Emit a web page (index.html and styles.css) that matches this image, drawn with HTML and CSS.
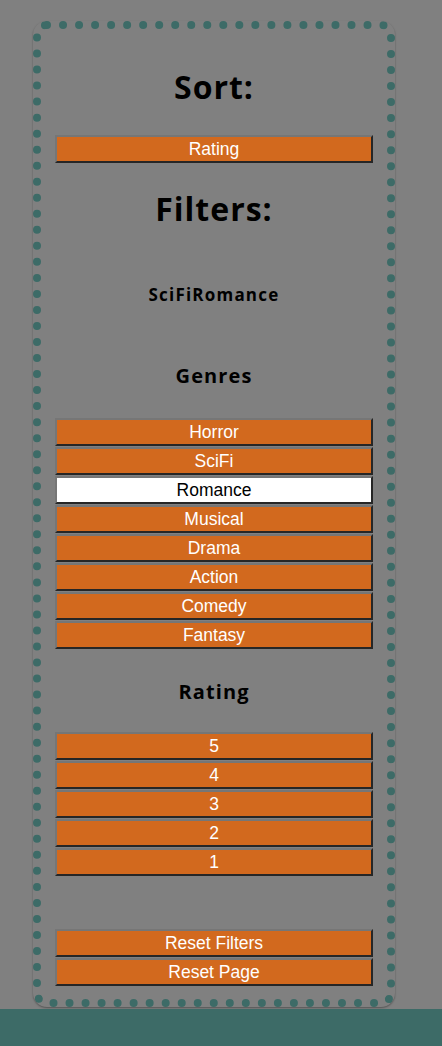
FILE: index.html
```html
<!DOCTYPE html>
<html>
<head>
<meta charset="utf-8">
<link rel="stylesheet" href="styles.css">
</head>
<body>
<div class="page">
  <aside class="panel">
    <h1 class="title title-sort">Sort:</h1>
    <button class="btn">Rating</button>
    <h1 class="title title-filters">Filters:</h1>
    <h4 class="active">SciFiRomance</h4>
    <h3 class="sub sub-genres">Genres</h3>
    <div class="list">
      <button class="btn">Horror</button>
      <button class="btn">SciFi</button>
      <button class="btn selected">Romance</button>
      <button class="btn">Musical</button>
      <button class="btn">Drama</button>
      <button class="btn">Action</button>
      <button class="btn">Comedy</button>
      <button class="btn">Fantasy</button>
    </div>
    <h3 class="sub sub-rating">Rating</h3>
    <div class="list">
      <button class="btn">5</button>
      <button class="btn">4</button>
      <button class="btn">3</button>
      <button class="btn">2</button>
      <button class="btn">1</button>
    </div>
    <div class="list resets">
      <button class="btn">Reset Filters</button>
      <button class="btn">Reset Page</button>
    </div>
  </aside>
</div>
<footer class="footer"></footer>
</body>
</html>
```
FILE: styles.css
```css
html, body {
  margin: 0;
  padding: 0;
  background: #808080;
}
body {
  min-height: 1046px;
  display: flex;
  flex-direction: column;
}
.page {
  padding: 21px 0 0 33px;
}
.panel {
  box-sizing: border-box;
  width: 362px;
  border: 8px dotted #3d6b67;
  border-radius: 14px;
  box-shadow: 0 1px 2px rgba(0, 0, 0, 0.35);
  padding: 0 14px 13px;
  display: flex;
  flex-direction: column;
  align-items: stretch;
  font-family: "Open Sans", "Liberation Sans", sans-serif;
  color: #000;
}
.title {
  margin: 0;
  font-size: 32px;
  font-weight: 700;
  line-height: 40px;
  text-align: center;
  letter-spacing: 1px;
}
.title-sort { margin-top: 38px; margin-bottom: 28px; }
.title-filters { margin-top: 26px; }
.active {
  margin: 56px 0 0;
  font-size: 17px;
  line-height: 20px;
  font-weight: 700;
  text-align: center;
  letter-spacing: 1.2px;
}
.sub {
  margin: 0;
  font-size: 20px;
  line-height: 24px;
  font-weight: 700;
  text-align: center;
  letter-spacing: 1.1px;
}
.sub-genres { margin-top: 59px; margin-bottom: 30px; }
.sub-rating { margin-top: 31px; margin-bottom: 28px; }
.list {
  display: flex;
  flex-direction: column;
  gap: 1px;
}
.resets { margin-top: 53px; }
.btn {
  box-sizing: border-box;
  height: 28px;
  width: 100%;
  margin: 0;
  padding: 0;
  background: #d2691e;
  color: #fff;
  font-family: "Liberation Sans", Arial, sans-serif;
  font-size: 17.5px;
  line-height: 24px;
  border: 2px solid;
  border-color: #767676 #262626 #262626 #767676;
  text-align: center;
}
.btn.selected {
  background: #fff;
  color: #000;
}
.footer {
  margin-top: 2px;
  flex: 1;
  background: #3d6b67;
}
```
